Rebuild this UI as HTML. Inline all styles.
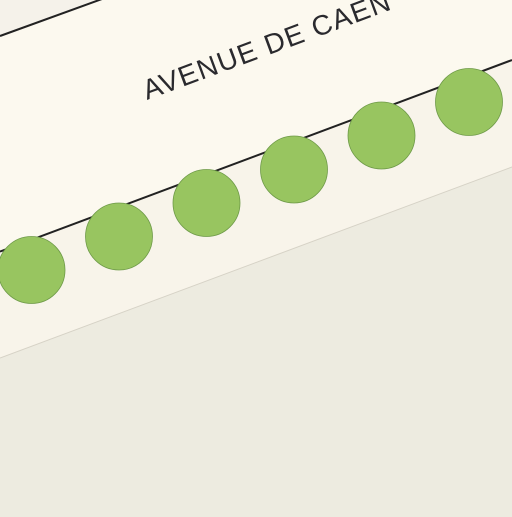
<!DOCTYPE html>
<html><head><meta charset="utf-8"><style>html,body{margin:0;padding:0;overflow:hidden;background:#edebe0}</style></head>
<body>
<svg width="512" height="512" viewBox="0 0 512 512" xmlns="http://www.w3.org/2000/svg">
<rect width="512" height="512" fill="#edebe0"/>
<polygon points="0,0 512,0 512,167 0,358" fill="#f8f4ea"/>
<polygon points="0,35 100,0 512,0 512,60 0,251.6" fill="#fcf9ef"/>
<polygon points="0,0 100,0 0,35" fill="#f5f2ea"/>
<line x1="0" y1="358" x2="512" y2="167" stroke="#d6d2c6" stroke-width="1"/>
<line x1="0" y1="36" x2="102" y2="-1" stroke="#222" stroke-width="2"/>
<line x1="0" y1="251.6" x2="512" y2="60" stroke="#222" stroke-width="2"/>
<g fill="#98c560" stroke="#6e9a48" stroke-width="0.8">
<circle cx="31.5" cy="270" r="33.5"/>
<circle cx="119" cy="236.5" r="33.5"/>
<circle cx="206.5" cy="203" r="33.5"/>
<circle cx="294" cy="169.5" r="33.5"/>
<circle cx="381.5" cy="135.5" r="33.5"/>
<circle cx="469" cy="102" r="33.5"/>
</g>
<text x="0" y="0" transform="translate(147,100) rotate(-20.3)" font-family="Liberation Sans, sans-serif" font-size="28" fill="#2a2a2e" letter-spacing="0.5" textLength="262" lengthAdjust="spacing">AVENUE DE CAEN</text>
</svg>
</body></html>
